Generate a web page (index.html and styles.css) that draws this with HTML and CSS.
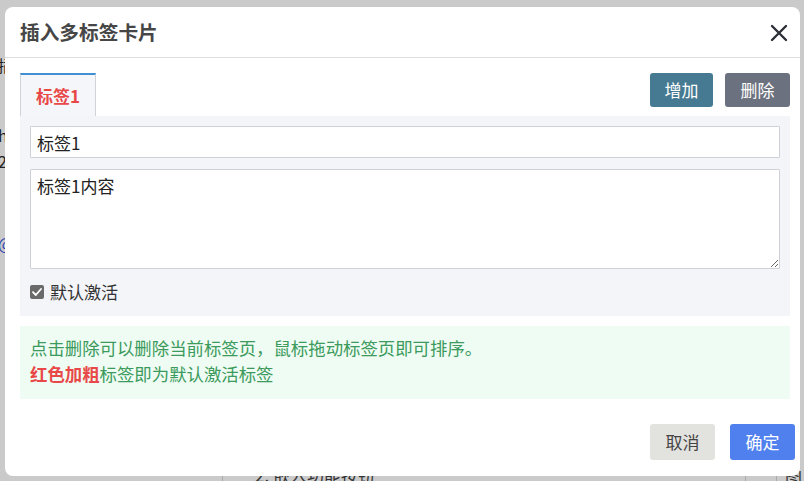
FILE: index.html
```html
<!DOCTYPE html>
<html lang="zh-CN">
<head>
<meta charset="utf-8">
<title>插入多标签卡片</title>
<link rel="stylesheet" href="styles.css">
</head>
<body>
<div class="page">
  <div class="page-side">
    <p class="frag f1">插</p>
    <p class="frag f2">h</p>
    <p class="frag f3">2</p>
    <p class="frag f4"><a href="#">@</a></p>
  </div>
  <div class="page-bottom">
    <span class="col-a"></span>
    <span class="bottom-text">2. 嵌入功能按钮</span>
    <span class="col-b"></span>
    <span class="col-c"></span>
    <span class="bottom-end">图</span>
  </div>
</div>

<div class="dialog">
  <div class="dlg-header">
    <h2 class="dlg-title">插入多标签卡片</h2>
    <svg class="dlg-close" width="18" height="18" viewBox="0 0 18 18"><path d="M2 2 L16 16 M16 2 L2 16" stroke="#2b2f36" stroke-width="2.4" stroke-linecap="round"/></svg>
  </div>
  <div class="dlg-body">
    <div class="tab-row">
      <div class="tab active">标签1</div>
      <div class="tab-actions">
        <button class="btn btn-add">增加</button>
        <button class="btn btn-del">删除</button>
      </div>
    </div>
    <div class="tab-panel">
      <input class="field" type="text" value="标签1">
      <textarea class="field area">标签1内容</textarea>
      <label class="check-row"><span class="check"><svg width="10" height="8" viewBox="0 0 10 8"><path d="M1 4.2 L3.8 7 L9 1" stroke="#fff" stroke-width="1.8" fill="none" stroke-linecap="round" stroke-linejoin="round"/></svg></span>默认激活</label>
    </div>
    <div class="info">
      <p>点击删除可以删除当前标签页，鼠标拖动标签页即可排序。</p>
      <p><strong class="red">红色加粗</strong>标签即为默认激活标签</p>
    </div>
  </div>
  <div class="dlg-footer">
    <button class="btn btn-cancel">取消</button>
    <button class="btn btn-ok">确定</button>
  </div>
</div>
</body>
</html>
```

FILE: styles.css
```css
* { box-sizing: border-box; }
html, body { margin: 0; padding: 0; }
body {
  width: 804px;
  height: 481px;
  overflow: hidden;
  background: #cacaca;
  font-family: "Noto Sans CJK SC", "Noto Sans", sans-serif;
  position: relative;
}
.page {
  height: 481px;
  display: flex;
  flex-direction: column;
  justify-content: space-between;
}
.page-side { padding-top: 50px; }
.frag {
  margin: 0;
  font-size: 16px;
  line-height: 20px;
  color: #222;
  margin-left: -2px;
}
.f1 { margin-top: 5px; }
.f2 { margin-top: 50px; }
.f3 { margin-top: 6px; }
.f4 { margin-top: 62px; }
.frag a { color: #2a3fb0; }
.page-bottom {
  height: 10px;
  display: flex;
  align-items: flex-start;
  font-size: 17px;
  color: #333;
  line-height: 18px;
  overflow: hidden;
}
.col-a { width: 1px; height: 10px; background: #aaa; margin-left: 222px; }
.bottom-text { margin-left: 32px; margin-top: -5px; }
.col-b { width: 1px; height: 10px; background: #aaa; margin-left: 370px; }
.col-c { width: 1px; height: 10px; background: #aaa; margin-left: 30px; }
.bottom-end { margin-left: 8px; margin-top: -5px; }

.dialog {
  position: absolute;
  left: 5px;
  top: 7px;
  width: 795px;
  height: 469px;
  background: #fff;
  border-radius: 8px;
  display: flex;
  flex-direction: column;
}
.dlg-header {
  height: 51px;
  border-bottom: 1px solid #dedede;
  padding: 0 12px 0 15px;
  display: flex;
  align-items: center;
  justify-content: space-between;
}
.dlg-title {
  margin: 0;
  font-size: 19.7px;
  font-weight: 700;
  color: #464646;
  line-height: 24px;
}
.dlg-close { display: block; margin-top: 1px; }

.dlg-body { padding: 15px 10px 0 15px; }
.tab-row {
  display: flex;
  justify-content: space-between;
  align-items: flex-start;
  height: 43px;
}
.tab {
  width: 76px;
  height: 43px;
  border-top: 2px solid #3f8fd2;
  border-left: 1px solid #cfd2d8;
  border-right: 1px solid #cfd2d8;
  background: #f5f6fa;
  color: #e84848;
  font-weight: 700;
  font-size: 17px;
  line-height: 20px;
  padding-top: 11px;
  text-align: center;
}
.tab-actions { display: flex; gap: 12px; }
.btn {
  border: none;
  border-radius: 3px;
  font-family: inherit;
  font-size: 17px;
  line-height: 20px;
  color: #fff;
  padding: 0;
}
.btn-add { width: 63px; height: 34px; background: #457a92; }
.btn-del { width: 65px; height: 34px; background: #6b717e; }

.tab-panel {
  background: #f4f5f9;
  padding: 10px 10px 0 10px;
  height: 200px;
  display: flex;
  flex-direction: column;
}
.field {
  display: block;
  width: 100%;
  height: 32px;
  border: 1px solid #cfd1d6;
  border-radius: 1px;
  background: #fff;
  font-family: inherit;
  font-size: 17px;
  color: #222;
  padding: 0 6px;
  outline: none;
}
.area {
  margin-top: 11px;
  height: 100px;
  padding: 5px 6px;
  line-height: 22px;
  resize: vertical;
}
.check-row {
  display: flex;
  align-items: center;
  gap: 6px;
  margin-top: 11px;
  font-size: 17px;
  line-height: 24px;
  color: #333;
}
.check {
  width: 14px;
  height: 14px;
  border-radius: 2px;
  background: #6a6a6a;
  display: flex;
  align-items: center;
  justify-content: center;
}
.check svg { display: block; }

.info {
  margin-top: 10px;
  background: #effcf3;
  padding: 9px 10px 12px 10px;
  height: 73px;
}
.info p {
  margin: 0;
  font-size: 17.4px;
  line-height: 26px;
  color: #3b9a5c;
}
.red { color: #e84848; font-weight: 700; }

.dlg-footer {
  margin-top: auto;
  padding: 0 5px 16px 0;
  display: flex;
  justify-content: flex-end;
  gap: 15px;
}
.btn-cancel { width: 65px; height: 36px; background: #e2e2df; color: #444; }
.btn-ok { width: 65px; height: 36px; background: #5080ee; }
```
